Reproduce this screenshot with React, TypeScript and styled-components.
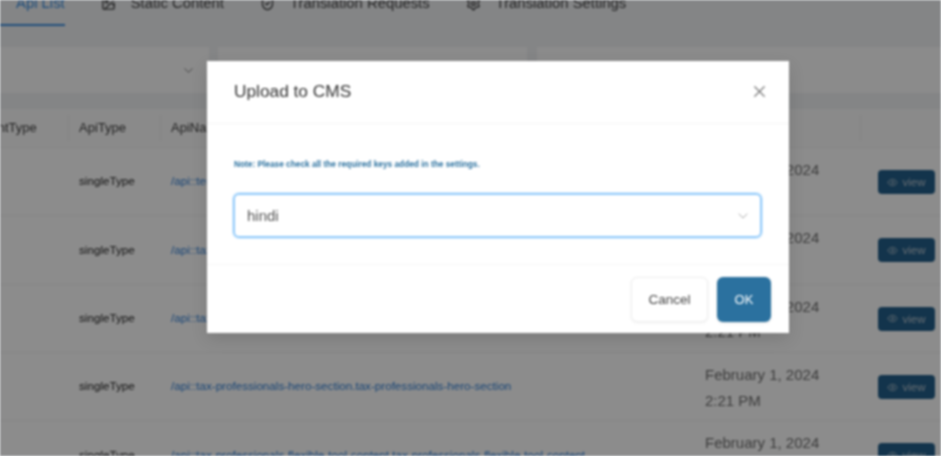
import styled, { createGlobalStyle } from "styled-components";
import { ChevronDown, Eye, ImagePlus, List, Settings, ShieldCheck, X } from "lucide-react";

const GlobalStyle = createGlobalStyle`
  html, body {
    margin: 0;
    padding: 0;
    background: #f0f2f5;
  }
`;

const tabs = [
  { label: "Api List", icon: List, active: true },
  { label: "Static Content", icon: ImagePlus },
  { label: "Translation Requests", icon: ShieldCheck },
  { label: "Translation Settings", icon: Settings },
];

const rows = [
  "/api::terms-and-conditions.terms-and-conditions",
  "/api::tax-professionals-faq.tax-professionals-faq",
  "/api::tax-professionals-cta.tax-professionals-cta",
  "/api::tax-professionals-hero-section.tax-professionals-hero-section",
  "/api::tax-professionals-flexible-tool-content.tax-professionals-flexible-tool-content",
];

function App() {
  return (
    <Page>
      <GlobalStyle />
      <TabBar>
        {tabs.map((tab) => (
          <Tab key={tab.label} $active={tab.active}>
            <tab.icon size={15} strokeWidth={2.2} />
            {tab.label}
          </Tab>
        ))}
      </TabBar>

      <Filters>
        <FilterBox $width="255.5px">
          <ChevronDown size={15} strokeWidth={1.5} />
        </FilterBox>
        <FilterBox $width="309px" />
        <FilterBox $width="420px" />
      </Filters>

      <Table>
        <HeaderRow>
          <HeaderCell>ContentType</HeaderCell>
          <HeaderCell>ApiType</HeaderCell>
          <HeaderCell>ApiName</HeaderCell>
          <HeaderCell>CreatedAt</HeaderCell>
          <HeaderCell $last />
        </HeaderRow>
        {rows.map((name) => (
          <Row key={name}>
            <Cell />
            <TypeCell>singleType</TypeCell>
            <NameCell>{name}</NameCell>
            <DateCell>
              February 1, 2024
              <br />
              2:21 PM
            </DateCell>
            <ActionCell>
              <ViewButton>
                <Eye size={11} strokeWidth={1.8} />
                view
              </ViewButton>
            </ActionCell>
          </Row>
        ))}
      </Table>

      <Overlay>
        <Modal>
          <ModalHeader>
            <ModalTitle>Upload to CMS</ModalTitle>
            <CloseIcon>
              <X size={19} strokeWidth={1.5} />
            </CloseIcon>
          </ModalHeader>
          <ModalBody>
            <Note>Note: Please check all the required keys added in the settings.</Note>
            <LanguageSelect>
              hindi
              <ChevronDown size={16} strokeWidth={1.5} />
            </LanguageSelect>
          </ModalBody>
          <ModalFooter>
            <CancelButton>Cancel</CancelButton>
            <OkButton>OK</OkButton>
          </ModalFooter>
        </Modal>
      </Overlay>
    </Page>
  );
}

export default App;

const Page = styled.div`
  position: relative;
  width: 941px;
  height: 456px;
  overflow: hidden;
  background: #f0f2f5;
  font-family: "Liberation Sans", Arial, sans-serif;
  filter: blur(0.8px);
`;

const TabBar = styled.div`
  display: flex;
  gap: 36px;
  margin: -10px 0 21px -14px;
`;

const Tab = styled.div<{ $active?: boolean }>`
  display: flex;
  align-items: center;
  gap: 15px;
  height: 18px;
  padding: 4px 0 12px;
  font-size: 14.85px;
  line-height: 18px;
  white-space: nowrap;
  color: ${(p) => (p.$active ? "#3b8fe0" : "#444")};
  border-bottom: 2px solid ${(p) => (p.$active ? "#3b8fe0" : "transparent")};
`;

const Filters = styled.div`
  display: flex;
  gap: 9.5px;
  margin: 0 0 16px -47px;
`;

const FilterBox = styled.div<{ $width: string }>`
  flex: none;
  box-sizing: border-box;
  width: ${(p) => p.$width};
  height: 46px;
  padding-right: 13px;
  display: flex;
  align-items: center;
  justify-content: flex-end;
  background: #fdfdfd;
  color: #777;
`;

const Table = styled.div`
  margin-left: -47px;
  width: 988px;
  background: #fff;
`;

const columns = "116px 92px 533px 167px 80px";

const HeaderRow = styled.div`
  display: grid;
  grid-template-columns: ${columns};
  height: 38px;
  align-items: center;
  background: #fbfbfb;
  border-bottom: 1px solid #f2f2f2;
`;

const HeaderCell = styled.div<{ $last?: boolean }>`
  box-sizing: border-box;
  height: 26px;
  padding-left: 10px;
  font-size: 13px;
  line-height: 26px;
  white-space: nowrap;
  overflow: hidden;
  color: #3f3f3f;
  border-right: ${(p) => (p.$last ? "none" : "1px solid #f0f0f0")};
`;

const Row = styled.div`
  display: grid;
  grid-template-columns: ${columns};
  box-sizing: border-box;
  height: 68.3px;
  align-items: center;
  border-bottom: 1px solid #f2f2f2;
`;

const Cell = styled.div`
  padding-left: 10px;
`;

const TypeCell = styled(Cell)`
  padding-bottom: 1.5px;
  font-size: 11.7px;
  color: #222;
`;

const NameCell = styled(Cell)`
  padding-bottom: 1.5px;
  font-size: 11.65px;
  white-space: nowrap;
  color: #2f7fd6;
`;

const DateCell = styled(Cell)`
  padding: 2px 0 0 11px;
  font-size: 15px;
  line-height: 25.5px;
  white-space: nowrap;
  color: #6f6f6f;
`;

const ActionCell = styled(Cell)`
  padding-left: 17px;
  padding-top: 1px;
`;

const ViewButton = styled.div`
  box-sizing: border-box;
  display: flex;
  align-items: center;
  justify-content: center;
  gap: 4px;
  width: 57px;
  height: 24px;
  border-radius: 4px;
  font-size: 11.5px;
  background: #235f8a;
  color: #b9c6d0;
`;

const Overlay = styled.div`
  position: absolute;
  inset: 0;
  padding: 61px 0 0 207px;
  background: rgba(0, 0, 0, 0.45);
`;

const Modal = styled.div`
  width: 582px;
  height: 272px;
  display: flex;
  flex-direction: column;
  background: #fff;
  box-shadow: 0 6px 16px rgba(0, 0, 0, 0.12);
`;

const ModalHeader = styled.div`
  box-sizing: border-box;
  height: 63px;
  flex: none;
  display: flex;
  align-items: center;
  justify-content: space-between;
  padding: 0 20px 2px 27px;
  border-bottom: 1px solid #f5f5f5;
`;

const ModalTitle = styled.div`
  font-size: 17.3px;
  color: #333;
`;

const CloseIcon = styled.div`
  display: flex;
  color: #777;
`;

const ModalBody = styled.div`
  box-sizing: border-box;
  flex: 1;
  padding: 34px 27px 0 26px;
  border-bottom: 1px solid #f7f7f7;
`;

const Note = styled.div`
  height: 12px;
  margin: 0 0 23px 1px;
  font-size: 8.3px;
  line-height: 13px;
  font-weight: 700;
  white-space: nowrap;
  color: #2b719f;
`;

const LanguageSelect = styled.div`
  box-sizing: border-box;
  height: 45px;
  display: flex;
  align-items: center;
  justify-content: space-between;
  padding: 0 9px 0 12px;
  border: 2px solid #93cbfb;
  border-radius: 6px;
  box-shadow: 0 0 0 1px #dceefd;
  font-size: 15px;
  color: #555;

  svg {
    color: #aaa;
  }
`;

const ModalFooter = styled.div`
  height: 68px;
  flex: none;
  box-sizing: border-box;
  display: flex;
  justify-content: flex-end;
  gap: 9px;
  padding: 12px 18px 11px;
`;

const CancelButton = styled.div`
  box-sizing: border-box;
  width: 77px;
  display: flex;
  align-items: center;
  justify-content: center;
  font-size: 13.5px;
  color: #444;
  background: #fff;
  border: 1px solid #eee;
  border-radius: 6px;
  box-shadow: 0 1px 3px rgba(0, 0, 0, 0.06);
`;

const OkButton = styled.div`
  width: 54px;
  display: flex;
  align-items: center;
  justify-content: center;
  font-size: 13px;
  color: #fff;
  background: #2b719f;
  border-radius: 6px;
  box-shadow: 0 1px 3px rgba(0, 0, 0, 0.1);
`;
